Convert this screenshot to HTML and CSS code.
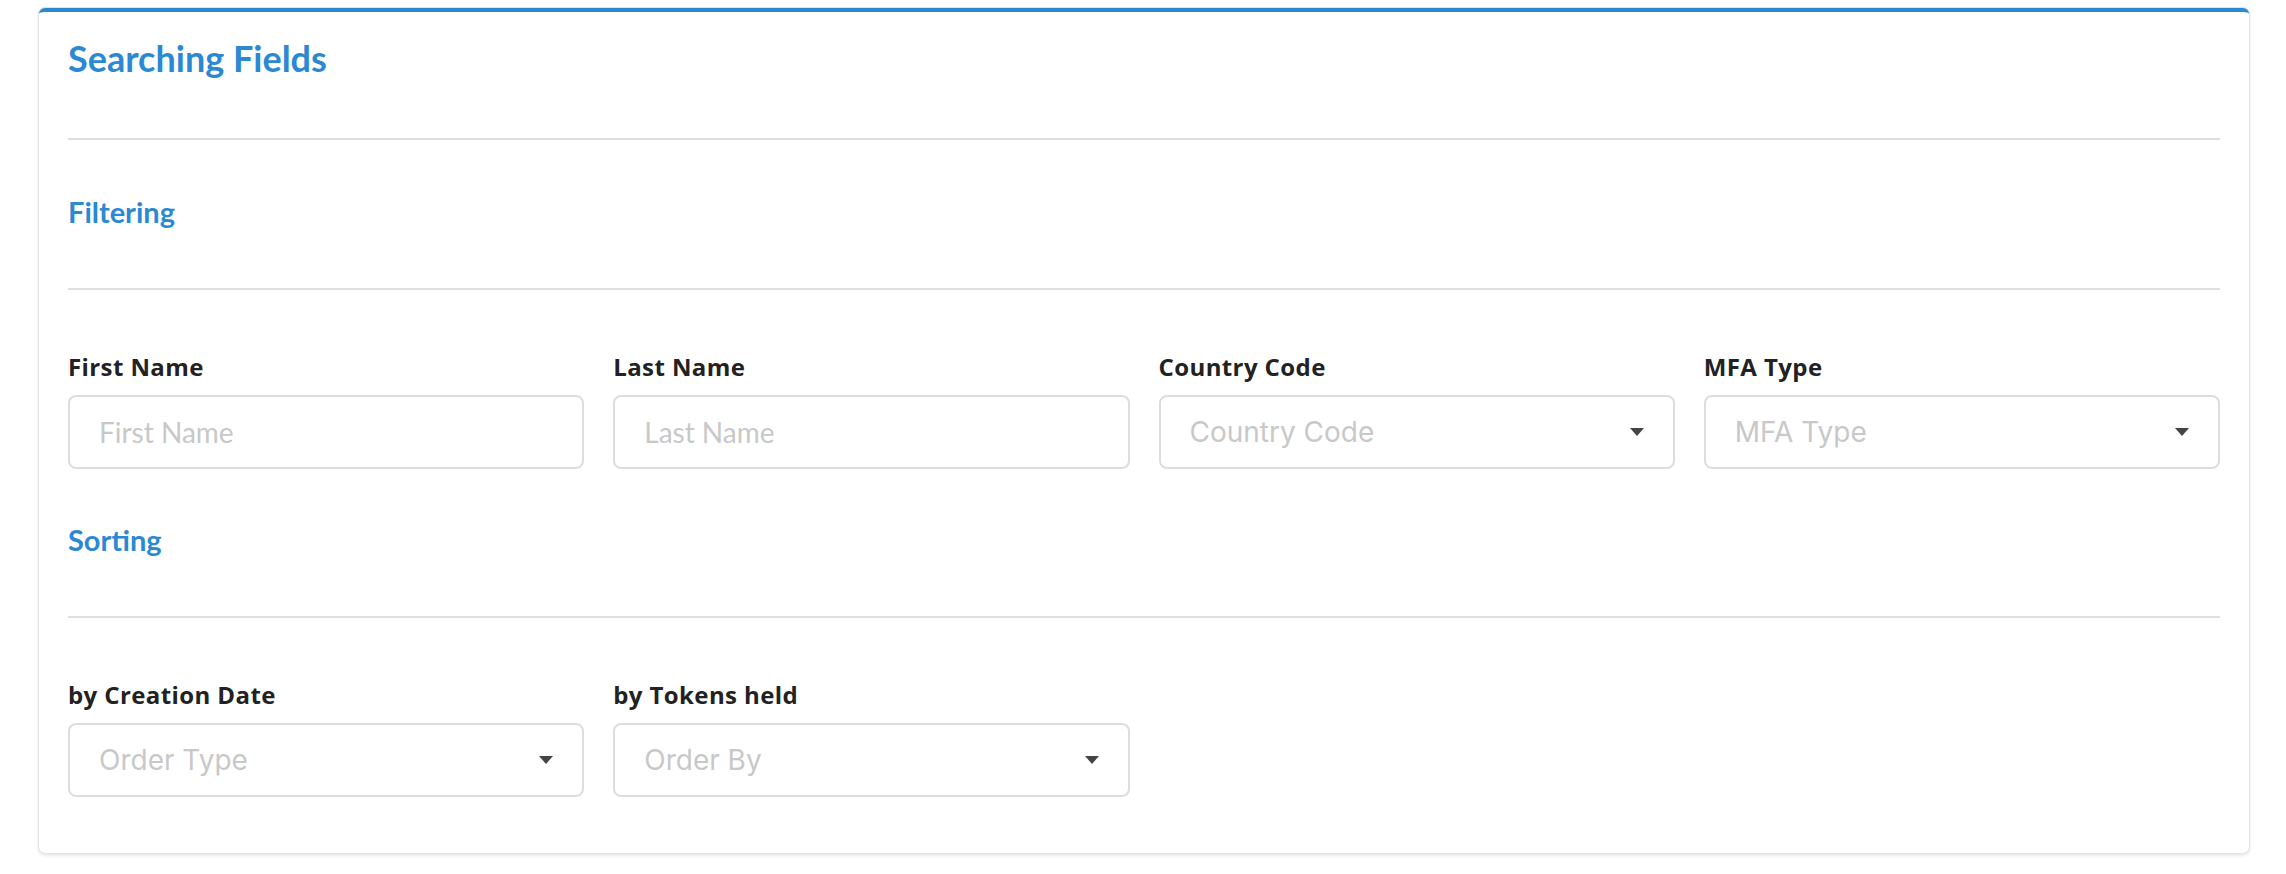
FILE: index.html
```html
<!DOCTYPE html>
<html lang="en">
<head>
<meta charset="utf-8">
<title>Searching Fields</title>
<link rel="stylesheet" href="styles.css">
</head>
<body>
<div class="page">
  <section class="card">
    <h2 class="card-title">Searching Fields</h2>
    <hr class="divider">
    <h3 class="section-title">Filtering</h3>
    <hr class="divider">
    <div class="fields">
      <div class="field">
        <label class="field-label">First Name</label>
        <input class="text-input" type="text" placeholder="First Name">
      </div>
      <div class="field">
        <label class="field-label">Last Name</label>
        <input class="text-input" type="text" placeholder="Last Name">
      </div>
      <div class="field">
        <label class="field-label">Country Code</label>
        <div class="select"><span class="select-placeholder">Country Code</span><span class="caret"></span></div>
      </div>
      <div class="field">
        <label class="field-label">MFA Type</label>
        <div class="select"><span class="select-placeholder">MFA Type</span><span class="caret"></span></div>
      </div>
    </div>
    <h3 class="section-title section-title--after-fields">Sorting</h3>
    <hr class="divider">
    <div class="fields">
      <div class="field">
        <label class="field-label">by Creation Date</label>
        <div class="select"><span class="select-placeholder">Order Type</span><span class="caret"></span></div>
      </div>
      <div class="field">
        <label class="field-label">by Tokens held</label>
        <div class="select"><span class="select-placeholder">Order By</span><span class="caret"></span></div>
      </div>
    </div>
  </section>
</div>
</body>
</html>
```

FILE: styles.css
```css
html, body {
  margin: 0;
  padding: 0;
  background: #ffffff;
}

.page {
  padding: 8px 37px 20px 39px;
}

.card {
  background: #ffffff;
  border-top: 4px solid #2b89d3;
  border-radius: 6px;
  box-shadow: 0 0 0 1px #e2e2e2, 0 2px 4px rgba(0, 0, 0, 0.14);
  padding: 25px 29px 56px;
}

.card-title {
  margin: 0;
  font-family: Lato, "Liberation Sans", sans-serif;
  font-weight: 700;
  font-size: 36px;
  line-height: 1.2;
  color: #2b89d3;
}

.divider {
  margin: 58px 0 0;
  border: 0;
  height: 2px;
  background: #dedede;
}

.section-title {
  margin: 55px 0 0;
  font-family: Lato, "Liberation Sans", sans-serif;
  font-weight: 700;
  font-size: 29px;
  line-height: 1.2;
  color: #2b89d3;
}

.section-title--after-fields {
  margin-top: 54px;
}

.fields {
  display: grid;
  grid-template-columns: repeat(4, 1fr);
  column-gap: 29px;
  margin-top: 61px;
}

.field {
  display: flex;
  flex-direction: column;
}

.field-label {
  font-family: "Open Sans", "Liberation Sans", sans-serif;
  font-weight: 700;
  font-size: 24px;
  line-height: 1.3;
  letter-spacing: 0.4px;
  color: #222222;
  margin-bottom: 13px;
}

.text-input,
.select {
  box-sizing: border-box;
  height: 74px;
  border: 2px solid #dddddd;
  border-radius: 8px;
  background: #ffffff;
  padding: 0 29px;
}

.text-input {
  width: 100%;
  font-family: Lato, "Liberation Sans", sans-serif;
  font-size: 28px;
  color: #333333;
  outline: none;
}

.text-input::placeholder {
  color: #c8c8c8;
}

.select {
  display: flex;
  align-items: center;
  justify-content: space-between;
}

.select-placeholder {
  font-family: Inter, "Liberation Sans", sans-serif;
  font-size: 28px;
  color: #c8c8c8;
}

.caret {
  width: 0;
  height: 0;
  border-left: 7px solid transparent;
  border-right: 7px solid transparent;
  border-top: 8px solid #444444;
}
```
